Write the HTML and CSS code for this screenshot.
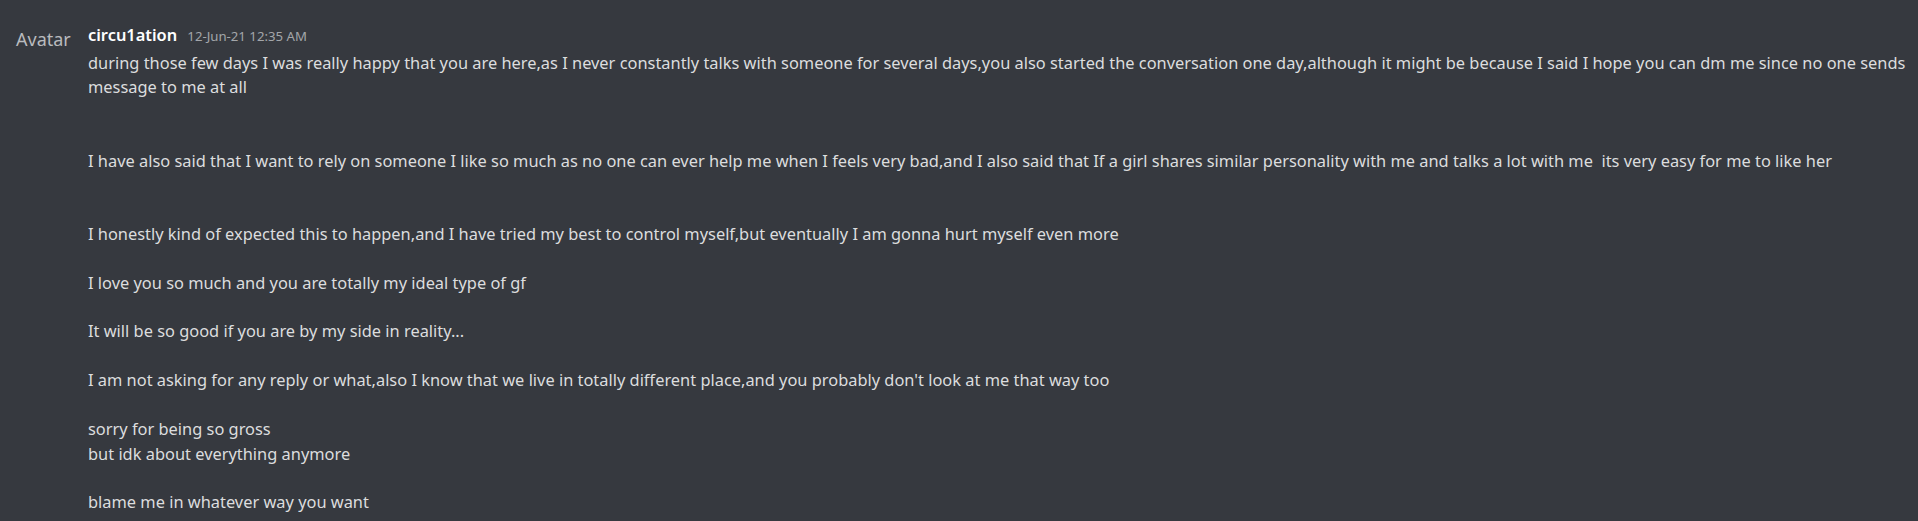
FILE: index.html
```html
<!DOCTYPE html>
<html>
  <head>
    <title>circu1ation</title>
    <link rel="stylesheet" href="styles.css">
  </head>
  <body>
    <div class="message">
      <div class="avatar">Avatar</div>
      <div class="contents">
        <div class="header">
          <span class="username">circu1ation</span>
          <span class="timestamp">12-Jun-21 12:35 AM</span>
        </div>
        <div class="markup">during those few days I was really happy that you are here,as I never constantly talks with someone for several days,you also started the conversation one day,although it might be because I said I hope you can dm me since no one sends message to me at all


I have also said that I want to rely on someone I like so much as no one can ever help me when I feels very bad,and I also said that If a girl shares similar personality with me and talks a lot with me  its very easy for me to like her


I honestly kind of expected this to happen,and I have tried my best to control myself,but eventually I am gonna hurt myself even more

I love you so much and you are totally my ideal type of gf

It will be so good if you are by my side in reality...

I am not asking for any reply or what,also I know that we live in totally different place,and you probably don't look at me that way too

sorry for being so gross
but idk about everything anymore

blame me in whatever way you want</div>
      </div>
    </div>
  </body>
</html>
```

FILE: styles.css
```css
body,
html {
  height: 100%;
  width: 100%;
  overflow: hidden;
}

body {
  margin: 0;
  background: #36393f;
  font-family: 'Noto Sans', sans-serif;
}

.message {
  display: flex;
  padding: 20px 2px 0 16px;
}

.avatar {
  flex: none;
  width: 72px;
  color: #b9bbbe;
  font-size: 18px;
  line-height: 24px;
  padding-top: 7px;
}

.contents {
  flex: 1;
  min-width: 0;
}

.header {
  line-height: 29px;
}

.username {
  color: #fff;
  font-weight: 600;
  font-size: 16.4px;
  margin-right: 6px;
}

.timestamp {
  color: #a3a6aa;
  font-size: 13.2px;
}

.markup {
  color: #dcddde;
  font-size: 16.4px;
  line-height: 24.4px;
  white-space: pre-wrap;
}
```
